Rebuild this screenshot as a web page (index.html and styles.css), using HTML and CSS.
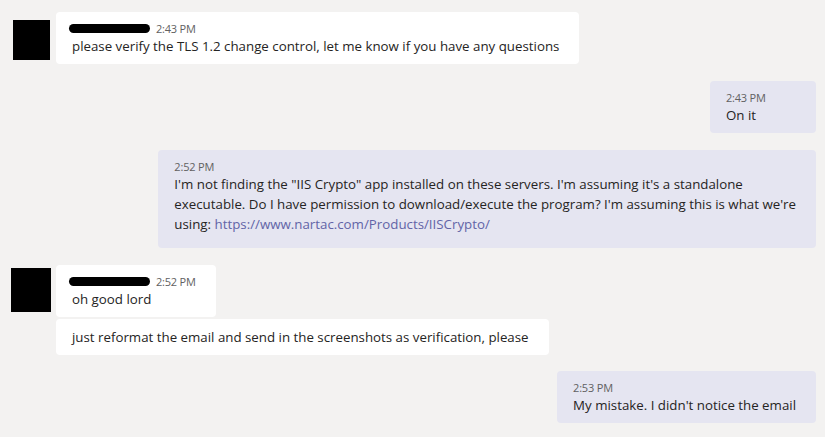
FILE: index.html
```html
<!DOCTYPE html>
<html>
<head>
<meta charset="utf-8">
<link rel="stylesheet" href="styles.css">
</head>
<body>
<div class="chat">
  <div class="row row-left">
    <div class="avatar avatar-a"></div>
    <div class="stack">
      <div class="bubble bubble-in">
        <div class="meta"><span class="name-redact"></span><span class="time">2:43 PM</span></div>
        <div class="text">please verify the TLS 1.2 change control, let me know if you have any questions</div>
      </div>
    </div>
  </div>

  <div class="row row-right">
    <div class="bubble bubble-out bubble-min">
      <div class="meta"><span class="time">2:43 PM</span></div>
      <div class="text">On it</div>
    </div>
  </div>

  <div class="row row-right">
    <div class="bubble bubble-out bubble-tall">
      <div class="meta"><span class="time">2:52 PM</span></div>
      <div class="text">I'm not finding the "IIS Crypto" app installed on these servers. I'm assuming it's a standalone<br>executable. Do I have permission to download/execute the program? I'm assuming this is what we're<br>using: <a class="link" href="#">https://www.nartac.com/Products/IISCrypto/</a></div>
    </div>
  </div>

  <div class="row row-left">
    <div class="avatar avatar-b"></div>
    <div class="stack">
      <div class="bubble bubble-in">
        <div class="meta"><span class="name-redact"></span><span class="time">2:52 PM</span></div>
        <div class="text">oh good lord</div>
      </div>
      <div class="bubble bubble-in">
        <div class="text">just reformat the email and send in the screenshots as verification, please</div>
      </div>
    </div>
  </div>

  <div class="row row-right row-last">
    <div class="bubble bubble-out">
      <div class="meta"><span class="time">2:53 PM</span></div>
      <div class="text">My mistake. I didn't notice the email</div>
    </div>
  </div>
</div>
</body>
</html>
```

FILE: styles.css
```css
html, body {
  margin: 0;
  padding: 0;
  background: #f3f2f1;
}

body {
  font-family: "Open Sans", "Noto Sans", "Liberation Sans", sans-serif;
  color: #252423;
  width: 825px;
  height: 437px;
  overflow: hidden;
}

.chat {
  display: flex;
  flex-direction: column;
  gap: 17px;
  padding-top: 12px;
}

.row {
  display: flex;
}

.row-right {
  justify-content: flex-end;
  padding-right: 9px;
}

.row-last {
  margin-top: -1px;
}

.stack {
  display: flex;
  flex-direction: column;
  align-items: flex-start;
  gap: 2px;
}

.avatar {
  background: #000;
  flex: none;
}

.avatar-a {
  width: 37px;
  height: 40px;
  margin: 8px 6px 0 13px;
}

.avatar-b {
  width: 40px;
  height: 44px;
  margin: 3px 5px 0 11px;
}

.bubble {
  border-radius: 4px;
  padding: 8px 20px 8px 16px;
  box-sizing: border-box;
}

.bubble-in {
  background: #ffffff;
}

.bubble-out {
  background: #e5e5f1;
}

.bubble-min {
  min-width: 106px;
}

.bubble-tall {
  padding-bottom: 14px;
}

.meta {
  display: flex;
  align-items: center;
  height: 16px;
}

.name-redact {
  display: inline-block;
  width: 81px;
  height: 9px;
  background: #000;
  border-radius: 5px;
  margin-left: -3px;
  margin-right: 6px;
}

.time {
  font-size: 11px;
  color: #616161;
  letter-spacing: -0.2px;
}

.text {
  font-size: 13.3px;
  line-height: 20px;
  white-space: nowrap;
}

.link {
  color: #6264a7;
  text-decoration: none;
}
```
